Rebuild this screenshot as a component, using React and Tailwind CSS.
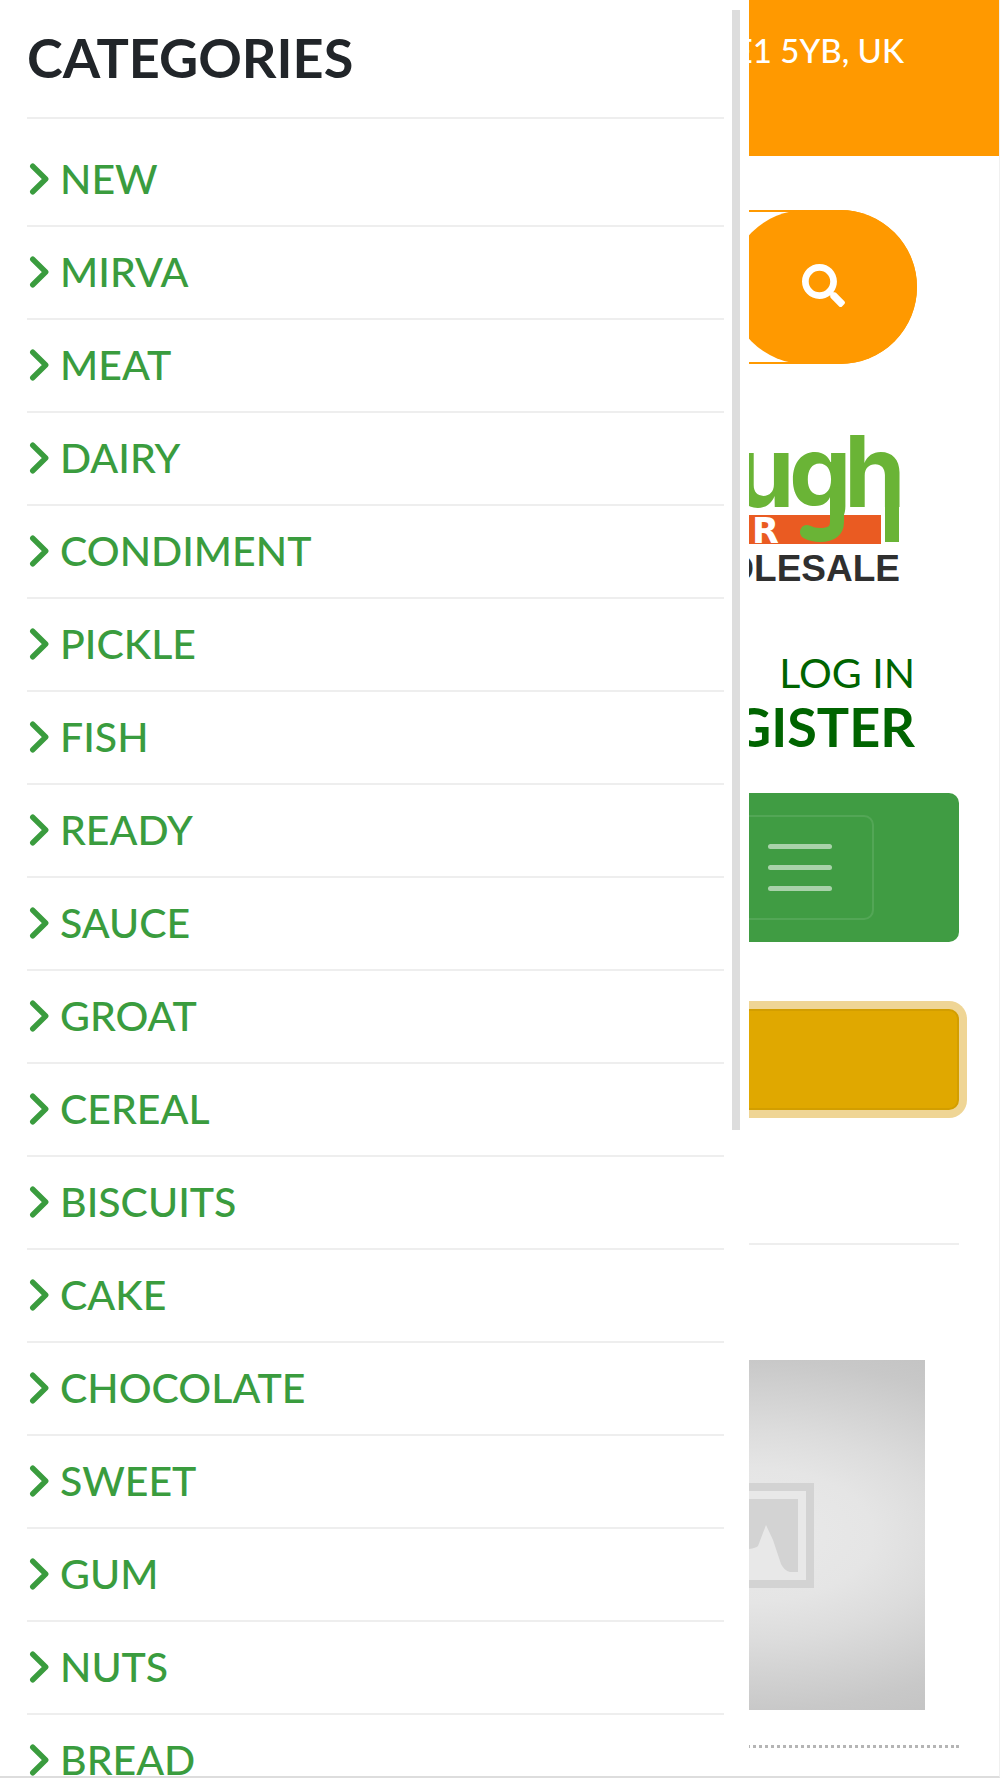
import { FaSearch } from 'react-icons/fa';

const categories = [
    'NEW', 'MIRVA', 'MEAT', 'DAIRY', 'CONDIMENT', 'PICKLE', 'FISH', 'READY', 'SAUCE',
    'GROAT', 'CEREAL', 'BISCUITS', 'CAKE', 'CHOCOLATE', 'SWEET', 'GUM', 'NUTS', 'BREAD',
];

function AngleIcon() {
    return (
        <svg className="h-[42px] w-[22px] shrink-0" viewBox="0 0 264 512" fill="none" aria-hidden="true">
            <path d="M68 100 L226 256 L68 412" stroke="currentColor" strokeWidth="66" strokeLinecap="round" strokeLinejoin="round" />
        </svg>
    )
}

function CategoryDrawer() {
    return (
        <aside className="absolute inset-y-0 left-0 w-3/4 flex overflow-hidden bg-white pl-[27px] pr-[9px]">
            <nav className="grow" aria-label="Categories">
                <h2 className="h-[119px] border-b-2 border-[#eeeeee] pt-[26px] text-[54px] leading-[64px] font-bold text-[#212529]">
                    CATEGORIES
                </h2>
                <ul className="pt-[15px]">
                    {categories.map((name) => (
                        <li key={name} className="h-[93px] border-b-2 border-[#eeeeee]">
                            <a href="#" className="flex h-[90px] items-center gap-[11px] text-[41px] leading-[60px] font-medium text-[#3a9c3e]">
                                <AngleIcon />
                                {name}
                            </a>
                        </li>
                    ))}
                </ul>
            </nav>
            <div className="mt-[10px] ml-[8px] h-[1120px] w-[8px] shrink-0 bg-[#dddddd]"></div>
        </aside>
    )
}

function Logo() {
    return (
        <svg className="h-[150px] w-[200px]" viewBox="0 0 200 150" role="img" aria-label="Wholesale logo">
            <text x="33 89 144" y="73" fill="#6ab436" fontFamily="Inter, sans-serif" fontWeight="700" fontSize="99">ugh</text>
            <rect x="85" y="75" width="45" height="6" fill="#ffffff" />
            <rect x="0" y="81" width="181" height="29" fill="#ea5b22" />
            <rect x="185" y="60" width="14" height="48" fill="#6ab436" />
            <path d="M137 60 V88 Q137 101 120 101 Q113 101 107 98" fill="none" stroke="#6ab436" strokeWidth="14" strokeLinecap="round" />
            <text x="52" y="109" fill="#ffffff" fontFamily="DejaVu Sans, sans-serif" fontWeight="700" fontSize="35">R</text>
            <text x="200" y="147" textAnchor="end" fill="#2f2f2f" fontFamily="Liberation Sans, sans-serif" fontWeight="700" fontSize="37">WHOLESALE</text>
        </svg>
    )
}

function ProductPlaceholder() {
    return (
        <svg className="h-[350px] w-[350px]" viewBox="0 0 350 350" role="img" aria-label="No image">
            <defs>
                <radialGradient id="shade" gradientUnits="userSpaceOnUse" cx="0" cy="0" r="1" gradientTransform="translate(175 175) scale(440 240)">
                    <stop offset="0" stopColor="#eaeaea" />
                    <stop offset="0.28" stopColor="#e5e5e5" />
                    <stop offset="0.44" stopColor="#dcdcdc" />
                    <stop offset="0.73" stopColor="#c8c8c8" />
                    <stop offset="1" stopColor="#bebebe" />
                </radialGradient>
            </defs>
            <rect width="350" height="350" fill="url(#shade)" />
            <rect x="115" y="127" width="120" height="97" fill="#e8e8e8" stroke="#d3d3d3" strokeWidth="8" />
            <path d="M127 139 H223 V212 H215 C211 211 208 208 206 204 L198 180 L191 165 L183 186 Q181 188 174 189 L150 200 L127 212 Z" fill="#d3d3d3" />
        </svg>
    )
}

function App() {
    return (
        <div className="relative min-h-screen overflow-hidden border-r border-b-2 border-r-[#f0f0f0] border-b-[#dddddd] bg-white font-['Lato',sans-serif]">
            <header className="h-[156px] bg-[#ff9900] pt-[25px] pr-[95px] text-right text-[33px] leading-[50px] font-medium text-white">
                E1 5YB, UK
            </header>
            <form className="mx-[82px] mt-[54px] flex h-[154px] justify-end rounded-full border-2 border-[#ff9900]">
                <input type="search" aria-label="Search" className="min-w-0 grow rounded-full px-8 outline-none" />
                <button type="button" aria-label="Search" className="-my-[2px] -mr-[2px] flex w-[188px] shrink-0 items-center justify-center rounded-full bg-[#ff9900] pb-1 text-white">
                    <FaSearch className="size-[43px]" />
                </button>
            </form>
            <div className="mt-[70px] mr-[99px] flex justify-end">
                <Logo />
            </div>
            <div className="mt-[62px] mr-[84px] flex flex-col items-end text-[#006400]">
                <a href="#" className="text-[41px] leading-[54px]">LOG IN</a>
                <a href="#" className="text-[54px] leading-[54px] font-bold">REGISTER</a>
            </div>
            <main className="mx-10">
                <div className="mt-[39px] flex justify-end rounded-[10px] bg-[#409c43] py-[22px] pr-[85px]">
                    <button type="button" aria-label="Toggle navigation" className="flex h-[105px] w-[148px] flex-col items-center justify-center gap-4 rounded-[10px] border-2 border-white/10">
                        <span className="h-[5px] w-16 rounded-full bg-white/55"></span>
                        <span className="h-[5px] w-16 rounded-full bg-white/55"></span>
                        <span className="h-[5px] w-16 rounded-full bg-white/55"></span>
                    </button>
                </div>
                <button type="button" aria-label="Show categories" className="mt-[67px] block h-[101px] w-full rounded-[10px] border-2 border-[#d39e00] bg-[#e0a800] ring-8 ring-[#efd595]"></button>
                <hr className="mt-[133px] border-t-2 border-[#eeeeee]" />
                <div className="mt-[115px] mr-[34px] flex justify-end">
                    <ProductPlaceholder />
                </div>
                <hr className="mt-[35px] border-t-3 border-dotted border-[#b5b5b5]" />
            </main>
            <CategoryDrawer />
        </div>
    )
}

export default App;
